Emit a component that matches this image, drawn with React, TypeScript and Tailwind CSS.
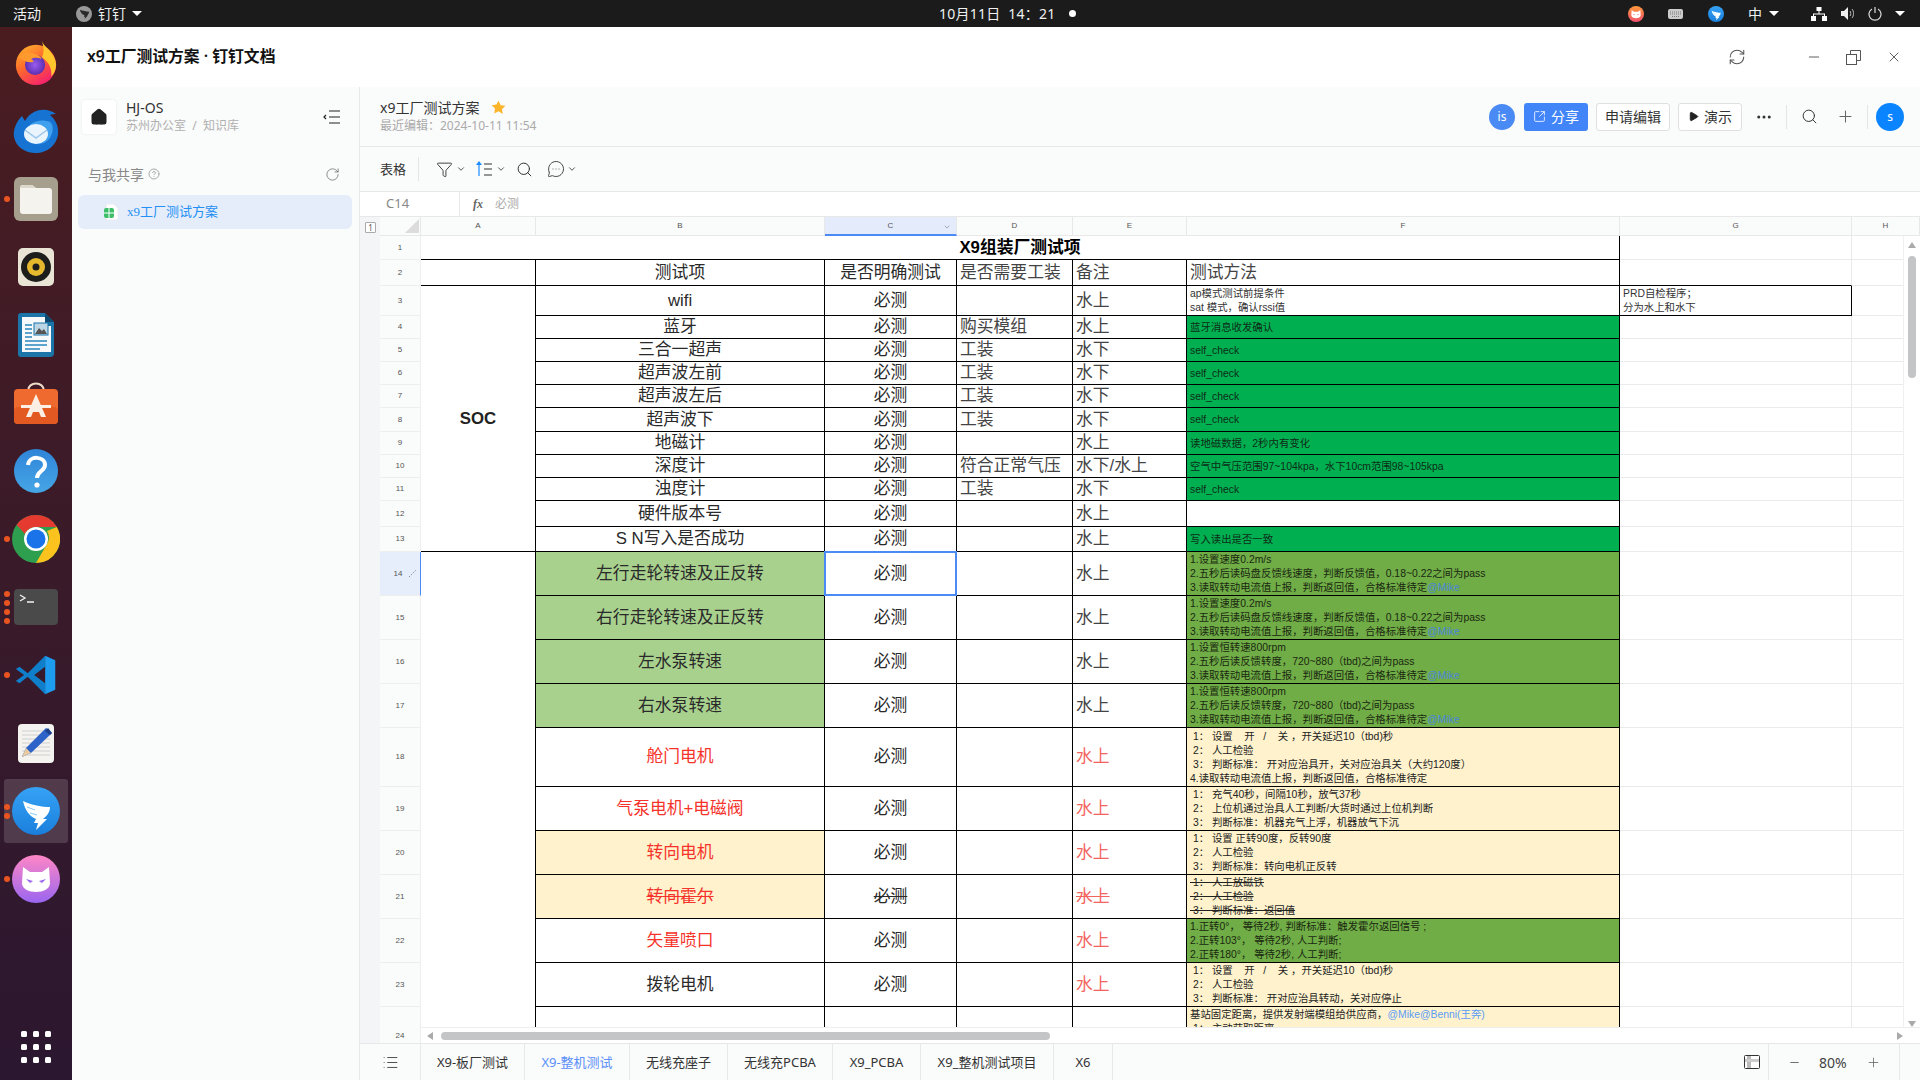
import React from "react";
import { RefreshCw, Minus, X, Search, Plus, SquareArrowOutUpRight, Play, Ellipsis, Funnel, ChevronDown, List, MessageCircleMore, RotateCw, House, CircleHelp } from "lucide-react";

const cellFont = "font-['Liberation_Sans','Noto_Sans_CJK_SC',sans-serif]";

const Firefox = () => (
  <svg width="46" height="46" viewBox="0 0 48 48">
    <defs>
      <linearGradient id="ff1" x1="0" y1="0" x2="0.6" y2="1"><stop offset="0" stopColor="#ffbd2e" /><stop offset="0.5" stopColor="#ff6a2b" /><stop offset="1" stopColor="#f5246b" /></linearGradient>
      <radialGradient id="ff2"><stop offset="0" stopColor="#9a5cf0" /><stop offset="1" stopColor="#5a2fb0" /></radialGradient>
    </defs>
    <circle cx="24" cy="26" r="21" fill="url(#ff1)" />
    <path d="M30 1c2 6 14 12 15 24 0 6-2 10-5 13 1-10-4-16-10-20 3-5 2-11 0-17z" fill="#ffc62e" />
    <circle cx="23" cy="26" r="10.5" fill="url(#ff2)" />
    <path d="M6 18c4-5 10-6 16-4 4 1 7 3 8 6-4-2-8-2-11 0 2 1 3 2 2 3-5 1-10-1-15-5z" fill="#ff9a2e" />
  </svg>
);
const Thunderbird = () => (
  <svg width="48" height="46" viewBox="0 0 48 46">
    <path d="M10 8c-6 6-9 14-8 21 2 10 11 16 22 16s21-8 22-19c1-8-3-15-8-19 2-1 4-1 6-1-5-4-14-6-22-2-4 2-7 5-9 9-1-2-2-3-3-5z" fill="#1673d1" />
    <path d="M14 22c4-8 14-12 24-8 3 2 4 8 1 14-3 7-12 10-19 7-6-3-8-8-6-13z" fill="#3fa0f0" />
    <ellipse cx="24" cy="26" rx="12" ry="10" fill="#eaf4fd" />
    <path d="M13 22l11 8 11-8" fill="none" stroke="#9cc6ea" strokeWidth="1.5" />
  </svg>
);
const Files = () => (
  <svg width="46" height="46" viewBox="0 0 46 46">
    <rect x="1" y="1" width="44" height="44" rx="6" fill="#a69f8e" />
    <path d="M7 12a3 3 0 013-3h9l4 3h13a3 3 0 013 3v20a3 3 0 01-3 3H10a3 3 0 01-3-3z" fill="#f5f3ee" />
    <path d="M7 12a3 3 0 013-3h9l4 3z" fill="#ddd8cc" />
  </svg>
);
const Rhythm = () => (
  <svg width="38" height="40" viewBox="0 0 38 40">
    <rect x="1" y="1" width="36" height="38" rx="5" fill="#e9e4d6" />
    <circle cx="19" cy="20" r="15" fill="#1d1d1b" />
    <circle cx="19" cy="20" r="9" fill="#e5b92e" />
    <circle cx="19" cy="20" r="3.5" fill="#1d1d1b" />
  </svg>
);
const Writer = () => (
  <svg width="38" height="46" viewBox="0 0 38 46">
    <path d="M4 1h24l9 9v31a4 4 0 01-4 4H4a3 3 0 01-3-3V4a3 3 0 013-3z" fill="#1b75a8" />
    <path d="M5 5h23v9h6v26H5z" fill="#f7f9fb" />
    <path d="M28 1l9 9h-9z" fill="#0e4a70" />
    <path d="M8 13h7M8 17h7M8 21h7M8 25h7M8 29h22M8 33h22M8 37h15" stroke="#2a86bf" strokeWidth="1.6" />
    <rect x="17" y="11" width="14" height="12" fill="#bcd6e6" stroke="#1b75a8" />
    <path d="M18 22l4-6 3 3 2-2 3 5z" fill="#555" />
  </svg>
);
const Store = () => (
  <svg width="46" height="44" viewBox="0 0 46 44">
    <path d="M15 10c0-10 16-10 16 0" fill="none" stroke="#ecdcc8" strokeWidth="2" />
    <rect x="1" y="8" width="44" height="35" rx="4" fill="#ef6a2e" />
    <rect x="1" y="26" width="44" height="17" rx="4" fill="#e25a22" />
    <path d="M23 13l-10 23h5l2-5h6l2 5h5z" fill="#fbeee4" />
    <path d="M8 24h30v3H8z" fill="#fbeee4" />
  </svg>
);
const Help = () => (
  <svg width="46" height="46" viewBox="0 0 46 46">
    <defs><linearGradient id="hp" x1="0" y1="0" x2="0" y2="1"><stop offset="0" stopColor="#2f84d8" /><stop offset="1" stopColor="#46a6e6" /></linearGradient></defs>
    <circle cx="23" cy="23" r="22" fill="url(#hp)" />
    <path d="M15 17c1-10 17-9 17 0 0 6-8 6-8 13" fill="none" stroke="#fff" strokeWidth="4" />
    <circle cx="24" cy="37" r="2.6" fill="#fff" />
  </svg>
);
const Chrome = () => (
  <svg width="48" height="48" viewBox="0 0 48 48">
    <circle cx="24" cy="24" r="24" fill="#2e9e4f" />
    <path d="M24 0a24 24 0 0120.8 12H24a12 12 0 00-11 7L4.6 9.8A24 24 0 0124 0z" fill="#e53a30" />
    <path d="M44.8 12A24 24 0 0124 48l10.4-18A12 12 0 0035 16z" fill="#fcc31e" />
    <circle cx="24" cy="24" r="12" fill="#fff" />
    <circle cx="24" cy="24" r="9.5" fill="#1a73e8" />
  </svg>
);
const Terminal = () => (
  <div className="w-[44px] h-[36px] rounded-[4px] bg-[#4a4a4a] relative">
    <svg width="44" height="36" viewBox="0 0 44 36" className="absolute inset-0">
      <path d="M6 6l5 3-5 3M13 13h7" fill="none" stroke="#f2f2f2" strokeWidth="1.3" />
    </svg>
  </div>
);
const VSCode = () => (
  <svg width="44" height="44" viewBox="0 0 48 48">
    <path fillRule="evenodd" d="M34 3L15 22 6 15l-4 2.5L11 24l-9 6.5L6 33l9-7 19 19V33L22 24l12-9z" fill="#0f7fcb" />
    <path d="M34 3l11 5v32l-11 5z" fill="#1e9cf0" />
  </svg>
);
const TextEd = () => (
  <svg width="38" height="46" viewBox="0 0 38 46">
    <rect x="1" y="4" width="36" height="39" rx="4" fill="#f4f3f0" />
    <path d="M5 11h28M5 15h28M5 19h28M5 23h28M5 27h28M5 31h28M5 35h28" stroke="#cfcfcf" />
    <path d="M29 8l6 5-21 20-9 4 4-9z" fill="#2d63c8" />
    <path d="M9 28l5 5-9 4z" fill="#e8c9a0" />
    <path d="M31 8l4 5-2 2-5-4z" fill="#1c3f88" />
  </svg>
);
const Wing = ({ id, size }: { id: string; size: number }) => (
  <svg width={size} height={size} viewBox="0 0 48 48">
    <defs><linearGradient id={id} x1="0" y1="0" x2="0" y2="1"><stop offset="0" stopColor="#36a2f5" /><stop offset="1" stopColor="#1a7fdc" /></linearGradient></defs>
    <circle cx="24" cy="24" r="24" fill={`url(#${id})`} />
    <path d="M11 14c9 4 19 6 27 6 0 5-3 9-7 12h4L24 43l2-7h-4l2-4c-7-3-11-9-13-18z" fill="#fff" />
    <path d="M15 20l8 3M18 26l7 2" stroke={"#8ccaf8"} strokeWidth="1" />
  </svg>
);
const Cat = ({ id, size, from = "#ff86c6", to = "#9a66f0" }: { id: string; size: number; from?: string; to?: string }) => (
  <svg width={size} height={size} viewBox="0 0 48 48">
    <defs><linearGradient id={id} x1="0" y1="0" x2="0" y2="1"><stop offset="0" stopColor={from} /><stop offset="1" stopColor={to} /></linearGradient></defs>
    <circle cx="24" cy="24" r="24" fill={`url(#${id})`} />
    <path d="M11 12l7 5h12l7-5 1 16c0 6-7 9-14 9s-14-3-14-9z" fill="#fff" />
    <path d="M14 24l7 2-3 2zM34 24l-7 2 3 2z" fill={to} />
  </svg>
);

const dockItems: { icon: React.ReactNode; dots: number; active?: boolean }[] = [
  { icon: <Firefox />, dots: 0 },
  { icon: <Thunderbird />, dots: 0 },
  { icon: <Files />, dots: 1 },
  { icon: <Rhythm />, dots: 0 },
  { icon: <Writer />, dots: 0 },
  { icon: <Store />, dots: 0 },
  { icon: <Help />, dots: 0 },
  { icon: <Chrome />, dots: 1 },
  { icon: <Terminal />, dots: 4 },
  { icon: <VSCode />, dots: 1 },
  { icon: <TextEd />, dots: 0 },
  { icon: <Wing id="w1" size={48} />, dots: 2, active: true },
  { icon: <Cat id="c1" size={48} />, dots: 1 },
];

function Dock() {
  return (
    <div className="w-[72px] shrink-0 flex flex-col bg-linear-to-b from-[#4a1c20] to-[#2b1730]">
      <div className="flex flex-col pt-[2px]">
        {dockItems.map((it, i) => (
          <div key={i} className="h-[68px] flex items-center justify-center relative">
            {it.active && <div className="absolute left-[4px] right-[4px] top-[2px] bottom-[2px] rounded-[3px] bg-white/15" />}
            {it.dots > 0 && (
              <div className="absolute left-[4px] top-0 bottom-0 flex flex-col justify-center gap-[3px]">
                {Array.from({ length: it.dots }).map((_, d) => (
                  <span key={d} className="block w-[6px] h-[6px] rounded-full bg-[#e95420]" />
                ))}
              </div>
            )}
            <div className="relative flex items-center justify-center">{it.icon}</div>
          </div>
        ))}
      </div>
      <div className="mt-auto mb-[17px] self-center grid grid-cols-3 gap-x-[6px] gap-y-[7px]">
        {Array.from({ length: 9 }).map((_, i) => (
          <span key={i} className="block w-[6px] h-[6px] rounded-[1.5px] bg-white" />
        ))}
      </div>
    </div>
  );
}

function TopBar() {
  return (
    <div className="h-[27px] shrink-0 bg-[#1b1b1b] text-[#f0f0f0] text-[14px] flex items-center relative">
      <span className="ml-[13px]">活动</span>
      <span className="ml-[35px] w-[16px] h-[16px] rounded-full bg-[#999] flex items-center justify-center">
        <svg width="11" height="11" viewBox="0 0 48 48"><path d="M4 8c11 5 28 8 40 8 0 8-5 13-10 17h5L24 48l3-10h-6l3-6C13 28 7 20 4 8z" fill="#2a2a2a" /></svg>
      </span>
      <span className="ml-[6px]">钉钉</span>
      <span className="ml-[6px] w-0 h-0 border-x-[5px] border-x-transparent border-t-[5px] border-t-white" />
      <div className="absolute left-[939px] top-0 h-[27px] flex items-center gap-[13px]">
        <span className="whitespace-pre tracking-[0.25px]">10月11日  14：21</span>
        <span className="w-[7px] h-[7px] rounded-full bg-white" />
      </div>
      <div className="ml-auto flex items-center h-full">
        <Cat id="c2" size={16} from="#ff9a3c" to="#f0506e" />
        <svg className="ml-[24px]" width="15" height="10" viewBox="0 0 15 10"><rect width="15" height="10" rx="2" fill="#ccc" /><path d="M2 3h11M2 5h11M4 7.5h7" stroke="#777" strokeWidth="1" strokeDasharray="1 1" /></svg>
        <span className="ml-[25px]"><Wing id="w2" size={16} /></span>
        <span className="ml-[24px] w-[16px]">中</span>
        <span className="ml-[5px] w-0 h-0 border-x-[5px] border-x-transparent border-t-[5px] border-t-white" />
        <svg className="ml-[32px]" width="16" height="14" viewBox="0 0 16 14" fill="#fff"><rect x="5.5" y="0" width="5" height="4" /><rect x="0" y="9" width="5" height="5" /><rect x="11" y="9" width="5" height="5" /><path d="M7.5 4h1v2.5H14V9h-1V7.5H3V9H2V6.500h5.500z" /></svg>
        <svg className="ml-[14px]" width="15" height="13" viewBox="0 0 15 13"><path d="M0 4h3l4-4v13l-4-4H0z" fill="#eee" /><path d="M9 4c1 1 1 4 0 5M11 2c2 2 2 7 0 9" stroke="#bbb" fill="none" /></svg>
        <svg className="ml-[12px]" width="14" height="14" viewBox="0 0 14 14" fill="none" stroke="#ddd" strokeWidth="1.2"><path d="M4 2a6 6 0 106 0M7 0v6" /></svg>
        <span className="ml-[13px] mr-[15px] w-0 h-0 border-x-[5px] border-x-transparent border-t-[5px] border-t-white" />
      </div>
    </div>
  );
}

function Sidebar() {
  return (
    <div className="w-[288px] shrink-0 bg-[#fafbfb] border-r border-[#e8e8e8] flex flex-col">
      <div className="flex items-center pl-[10px] pr-[18px] pt-[11px]">
        <div className="w-[34px] h-[34px] rounded-[4px] bg-white shadow-[0_0_3px_rgba(0,0,0,0.08)] flex items-center justify-center">
          <House size={18} fill="#222" stroke="#222" />
        </div>
        <div className="ml-[10px] flex flex-col">
          <span className="text-[14px] leading-[19px] text-[#333]">HJ-OS</span>
          <span className="text-[12px] leading-[18px] text-[#b0b0b0]">苏州办公室&nbsp;&nbsp;/&nbsp;&nbsp;知识库</span>
        </div>
        <svg className="ml-auto" width="18" height="14" viewBox="0 0 18 14" fill="none" stroke="#222" strokeWidth="1.2"><path d="M6 1h11M6 7h11M6 13h11M3 5L1 7l2 2" /></svg>
      </div>
      <div className="flex items-center pl-[16px] pr-[19px] mt-[27px] h-[24px]">
        <span className="text-[14px] text-[#888]">与我共享</span>
        <CircleHelp size={12} className="ml-[4px] text-[#aaa]" />
        <RotateCw size={15} strokeWidth={1.2} className="ml-auto text-[#666]" />
      </div>
      <div className="ml-[6px] mr-[7px] mt-[9px] h-[34px] rounded-[6px] bg-[#e6edfa] flex items-center pl-[26px]">
        <svg width="14" height="16" viewBox="0 0 14 16"><path d="M2 0h8l4 4v12H2z" fill="#fff" stroke="#ddd" strokeWidth="0.6" /><rect x="0" y="4" width="10" height="10" rx="2" fill="#3dbf6a" /><path d="M0 9h10M5 4v10" stroke="#fff" /></svg>
        <span className="ml-[9px] text-[13px] text-[#2390f5] font-['Liberation_Serif','Noto_Sans_CJK_SC',serif]">x9工厂测试方案</span>
      </div>
    </div>
  );
}

function DocHeader() {
  return (
    <div className="h-[60px] shrink-0 bg-[#fafbfb] border-b border-[#e8e8e8] flex items-center pl-[20px]">
      <div className="flex flex-col">
        <div className="flex items-center">
          <span className="text-[14px] leading-[19px] text-[#333]">x9工厂测试方案</span>
          <svg className="ml-[12px]" width="15" height="15" viewBox="0 0 24 24" fill="#fbb52b"><path d="M12 1l3.400 7.200 7.600 1-5.500 5.400 1.400 7.900L12 18l-6.900 3.500 1.400-7.900L1 8.200l7.600-1z" /></svg>
        </div>
        <span className="text-[12px] leading-[18px] text-[#aaa]">最近编辑：2024-10-11 11:54</span>
      </div>
      <div className="ml-auto flex items-center pr-[16px]">
        <span className="w-[26px] h-[26px] rounded-full bg-[#4a8af4] text-white text-[12px] flex items-center justify-center">is</span>
        <button className="ml-[9px] w-[64px] h-[28px] rounded-[3px] bg-[#4285f8] text-white text-[14px] flex items-center justify-center gap-[5px]">
          <SquareArrowOutUpRight size={13} strokeWidth={1.5} />分享
        </button>
        <button className="ml-[8px] w-[74px] h-[28px] rounded-[3px] bg-white border border-[#e0e0e0] text-[14px] text-[#333]">申请编辑</button>
        <button className="ml-[8px] w-[64px] h-[28px] rounded-[3px] bg-white border border-[#e0e0e0] text-[14px] text-[#333] flex items-center justify-center gap-[5px]">
          <Play size={11} fill="#222" stroke="#222" />演示
        </button>
        <Ellipsis size={18} className="ml-[13px] text-[#333]" />
        <span className="ml-[13px] w-px h-[24px] bg-[#e5e5e5]" />
        <Search size={17} strokeWidth={1.4} className="ml-[14px] text-[#333]" />
        <Plus size={19} strokeWidth={1.3} className="ml-[18px] text-[#666]" />
        <span className="ml-[12px] w-px h-[24px] bg-[#e5e5e5]" />
        <span className="ml-[8px] w-[28px] h-[28px] rounded-full bg-[#0a84ff] text-white text-[12px] flex items-center justify-center">s</span>
      </div>
    </div>
  );
}

function Toolbar() {
  return (
    <div className="h-[45px] shrink-0 bg-[#fafbfb] border-b border-[#e8e8e8] flex items-center pl-[20px] text-[#333]">
      <span className="text-[13px] pt-px">表格</span>
      <span className="ml-[12px] w-px h-[24px] bg-[#e5e5e5]" />
      <Funnel size={17} strokeWidth={1.3} className="ml-[17px]" />
      <ChevronDown size={10} className="ml-[3px]" />
      <svg className="ml-[10px]" width="18" height="16" viewBox="0 0 18 16" fill="none"><path d="M3 15V3" stroke="#1a8cff" strokeWidth="1.2" /><path d="M3 0l3 4H0z" fill="#1a8cff" /><path d="M8 3h8M8 8h8M8 14h8" stroke="#333" strokeWidth="1.2" /></svg>
      <ChevronDown size={10} className="ml-[2px]" />
      <Search size={17} strokeWidth={1.4} className="ml-[10px]" />
      <MessageCircleMore size={18} strokeWidth={1.2} className="ml-[14px]" />
      <ChevronDown size={10} className="ml-[2px]" />
    </div>
  );
}

function FormulaBar() {
  return (
    <div className="h-[25px] shrink-0 bg-white border-b border-[#e8e8e8] flex items-center">
      <div className="w-[100px] h-full border-r border-[#e8e8e8] pl-[26px] flex items-center text-[13px] text-[#888]">C14</div>
      <span className="ml-[13px] text-[12px] italic font-bold font-['Liberation_Serif',serif] text-[#666]">fx</span>
      <span className="ml-[12px] text-[12px] text-[#aaa]">必测</span>
    </div>
  );
}

type Row = {
  n: number;
  h: string;
  b?: string;
  bCls?: string;
  c?: string;
  cCls?: string;
  d?: string;
  e?: string;
  eCls?: string;
  f?: React.ReactNode;
  fCls?: string;
  top?: boolean;
};

const Mike = () => <span className="text-[#4a86d8]">@Mike</span>;
const speedLines = (
  <>
    1.设置速度0.2m/s<br />2.五秒后读码盘反馈线速度，判断反馈值，0.18~0.22之间为pass<br />3.读取转动电流值上报，判断返回值，合格标准待定<Mike />
  </>
);
const pumpLines = (
  <>
    1.设置恒转速800rpm<br />2.五秒后读反馈转度，720~880（tbd)之间为pass<br />3.读取转动电流值上报，判断返回值，合格标准待定<Mike />
  </>
);
const G1 = "bg-[#00b050] text-[#0e2c18]";
const G2 = "bg-[#70ad47] text-[#1a2810]";
const CR = "bg-[#fff2cc] text-[#222]";
const LG = "bg-[#a9d18e]";
const Y = "bg-[#fff2cc]";
const RB = "text-[#f5332b]";
const RE = "text-[#f4645f]";

const rows: Row[] = [
  { n: 3, h: "h-[30px]", b: "wifi", c: "必测", e: "水上", f: <>ap模式测试前提条件<br />sat 模式，确认rssi值</> },
  { n: 4, h: "h-[23px]", b: "蓝牙", c: "必测", d: "购买模组", e: "水上", f: "蓝牙消息收发确认", fCls: G1 },
  { n: 5, h: "h-[23px]", b: "三合一超声", c: "必测", d: "工装", e: "水下", f: "self_check", fCls: G1 },
  { n: 6, h: "h-[23px]", b: "超声波左前", c: "必测", d: "工装", e: "水下", f: "self_check", fCls: G1 },
  { n: 7, h: "h-[23px]", b: "超声波左后", c: "必测", d: "工装", e: "水下", f: "self_check", fCls: G1 },
  { n: 8, h: "h-[24px]", b: "超声波下", c: "必测", d: "工装", e: "水下", f: "self_check", fCls: G1 },
  { n: 9, h: "h-[23px]", b: "地磁计", c: "必测", e: "水上", f: "读地磁数据，2秒内有变化", fCls: G1 },
  { n: 10, h: "h-[23px]", b: "深度计", c: "必测", d: "符合正常气压", e: "水下/水上", f: "空气中气压范围97~104kpa，水下10cm范围98~105kpa", fCls: G1 },
  { n: 11, h: "h-[23px]", b: "浊度计", c: "必测", d: "工装", e: "水下", f: "self_check", fCls: G1 },
  { n: 12, h: "h-[26px]", b: "硬件版本号", c: "必测", e: "水上" },
  { n: 13, h: "h-[25px]", b: "S N写入是否成功", c: "必测", e: "水上", f: "写入读出是否一致", fCls: G1 },
  { n: 14, h: "h-[44px]", b: "左行走轮转速及正反转", bCls: LG, c: "必测", e: "水上", f: speedLines, fCls: G2 },
  { n: 15, h: "h-[44px]", b: "右行走轮转速及正反转", bCls: LG, c: "必测", e: "水上", f: speedLines, fCls: G2 },
  { n: 16, h: "h-[44px]", b: "左水泵转速", bCls: LG, c: "必测", e: "水上", f: pumpLines, fCls: G2 },
  { n: 17, h: "h-[44px]", b: "右水泵转速", bCls: LG, c: "必测", e: "水上", f: pumpLines, fCls: G2 },
  { n: 18, h: "h-[59px]", b: "舱门电机", bCls: RB, c: "必测", e: "水上", eCls: RE, fCls: CR, f: <> 1： 设置    开   /    关 ，开关延迟10（tbd)秒<br /> 2： 人工检验<br /> 3： 判断标准： 开对应治具开，关对应治具关（大约120度）<br />4.读取转动电流值上报，判断返回值，合格标准待定</> },
  { n: 19, h: "h-[44px]", b: "气泵电机+电磁阀", bCls: RB, c: "必测", e: "水上", eCls: RE, fCls: CR, f: <> 1： 充气40秒，间隔10秒，放气37秒<br /> 2： 上位机通过治具人工判断/大货时通过上位机判断<br /> 3： 判断标准：机器充气上浮，机器放气下沉</> },
  { n: 20, h: "h-[44px]", b: "转向电机", bCls: `${Y} ${RB}`, c: "必测", e: "水上", eCls: RE, fCls: CR, f: <> 1： 设置 正转90度，反转90度<br /> 2： 人工检验<br /> 3： 判断标准：转向电机正反转</> },
  { n: 21, h: "h-[44px]", b: "转向霍尔", bCls: `${Y} ${RB} line-through`, c: "必测", cCls: "line-through", e: "水上", eCls: `${RE} line-through`, fCls: `${CR} line-through`, f: <> 1： 人工放磁铁<br /> 2： 人工检验<br /> 3： 判断标准：返回值</> },
  { n: 22, h: "h-[44px]", b: "矢量喷口", bCls: RB, c: "必测", e: "水上", eCls: RE, fCls: G2, f: <>1.正转0°， 等待2秒, 判断标准：触发霍尔返回信号 ;<br />2.正转103°， 等待2秒, 人工判断;<br />2.正转180°， 等待2秒, 人工判断;</> },
  { n: 23, h: "h-[44px]", b: "拨轮电机", c: "必测", e: "水上", eCls: RE, fCls: CR, f: <> 1： 设置    开   /    关 ，开关延迟10（tbd)秒<br /> 2： 人工检验<br /> 3： 判断标准： 开对应治具转动，关对应停止</> },
  { n: 24, h: "h-[59px]", top: true, fCls: CR, f: <>基站固定距离，提供发射端模组给供应商，<span className="text-[#5b9cf6]">@Mike@Benni(王奔)</span><br /> 1： 主动获取距离</> },
];

const RH = "bg-[#fafbfb] border-b border-r border-[#eeeeee] text-center text-[8px] text-[#555] p-0";
const big = "border-b border-r border-black p-0 text-[16.8px] leading-[18px] text-[#2a2a2a] text-center align-middle overflow-hidden whitespace-nowrap";
const left = "border-b border-r border-black pl-[3px] p-0 text-[16.8px] leading-[18px] text-[#444] text-left align-middle whitespace-nowrap overflow-hidden";
const method = "border-b border-r border-black pl-[3px] pr-0 pt-px pb-0 text-[10.4px] leading-[14px] text-left align-middle whitespace-pre overflow-hidden";
const blank = "border-b border-r border-[#eaeaea] p-0";

function Sheet() {
  const headers: [string, string][] = [["A", ""], ["B", ""], ["C", "sel"], ["D", ""], ["E", ""], ["F", ""], ["G", ""], ["H", ""]];
  return (
    <div className="flex-1 min-h-0 flex bg-white">
      <div className="w-[20px] shrink-0 bg-[#f4f5f6] pt-[5px] pl-[5px]">
        <span className="w-[11px] h-[11px] bg-white border border-[#aaa] text-[8px] leading-[9px] text-center text-[#555] block rounded-[1px]">1</span>
      </div>
      <div className={`relative flex-1 min-w-0 overflow-hidden ${cellFont}`}>
        <table className="table-fixed border-separate border-spacing-0 w-[1540px]">
          <colgroup>
            <col className="w-[41px]" />
            <col className="w-[115px]" />
            <col className="w-[289px]" />
            <col className="w-[132px]" />
            <col className="w-[116px]" />
            <col className="w-[114px]" />
            <col className="w-[433px]" />
            <col className="w-[232px]" />
            <col className="w-[68px]" />
          </colgroup>
          <tbody>
            <tr className="h-[19px]">
              <td className="bg-[#fafbfb] border-b border-r border-[#e8e8e8] p-0">
                <svg className="ml-[25px]" width="14" height="14" viewBox="0 0 14 14"><path d="M14 0v14H0z" fill="#dcdcdc" /></svg>
              </td>
              {headers.map(([l, s]) =>
                s ? (
                  <td key={l} className="bg-[#e4ecfb] border-b-2 border-b-[#4a8af4] border-r border-r-[#e8e8e8] p-0 text-center text-[8px] text-[#555] relative">
                    {l}
                    <ChevronDown size={8} className="absolute right-[5px] top-[6px] text-[#888]" />
                  </td>
                ) : (
                  <td key={l} className="bg-[#fafbfb] border-b border-r border-[#e8e8e8] p-0 text-center text-[8px] text-[#555]">{l}</td>
                )
              )}
            </tr>
            <tr className="h-[24px]">
              <td className={RH}>1</td>
              <td colSpan={6} className="border-b border-r border-black p-0 text-center text-[16.8px] leading-[18px] font-bold text-black">X9组装厂测试项</td>
              <td className={blank} />
              <td className={blank} />
            </tr>
            <tr className="h-[26px]">
              <td className={RH}>2</td>
              <td className="border-b border-r border-black p-0" />
              <td className={big}>测试项</td>
              <td className={big}>是否明确测试</td>
              <td className={left}>是否需要工装</td>
              <td className={left}>备注</td>
              <td className={left}>测试方法</td>
              <td className="border-b border-r border-b-black border-r-[#eaeaea] p-0" />
              <td className={blank} />
            </tr>
            {rows.map((r) => (
              <tr key={r.n} className={r.h}>
                {r.n === 14 ? (
                  <td className="bg-[#e6edfb] border-b border-r border-b-[#eeeeee] border-r-[#4a8af4] p-0 text-[8px] text-[#555] text-center relative">
                    <span className="mr-[4px]">14</span>
                    <svg className="absolute right-[4px] top-[18px]" width="7" height="7" viewBox="0 0 7 7" fill="none" stroke="#889" strokeWidth="1"><path d="M0 7l7-7" strokeDasharray="1.500 1.500" /></svg>
                  </td>
                ) : (
                  <td className={RH}>{r.n}</td>
                )}
                {r.n === 3 && <td rowSpan={11} className="border-b border-r border-black p-0 text-center text-[16.8px] font-bold text-[#222]">SOC</td>}
                {r.n === 14 && <td rowSpan={11} className="border-r border-black p-0" />}
                <td className={`${big} ${r.bCls ?? ""}`}>{r.b}</td>
                <td className={`${big} ${r.cCls ?? ""} ${r.n === 14 ? "relative overflow-visible" : ""}`}>
                  {r.c}
                  {r.n === 14 && <span className="absolute -left-px -top-px -right-px -bottom-px border-2 border-[#4a8af4]" />}
                </td>
                <td className={left}>{r.d}</td>
                <td className={`${left} ${r.eCls ?? ""}`}>{r.e}</td>
                <td className={`${method} ${r.fCls ?? "text-[#333]"} ${r.top ? "align-top" : ""}`}>{r.f}</td>
                {r.n === 3 ? (
                  <td className={`${method} text-[#333]`}>PRD自检程序；<br />分为水上和水下</td>
                ) : (
                  <td className={blank} />
                )}
                <td className={blank} />
              </tr>
            ))}
          </tbody>
        </table>
        <div className="absolute right-0 top-[19px] bottom-0 w-[17px] bg-white border-l border-[#f0f0f0]">
          <span className="absolute left-[4px] top-[6px] w-0 h-0 border-x-[4px] border-x-transparent border-b-[6px] border-b-[#aaa]" />
          <span className="absolute left-[4px] top-[20px] w-[8px] h-[122px] rounded-[4px] bg-[#c4c5c7]" />
          <span className="absolute left-[4px] bottom-[16px] w-0 h-0 border-x-[4px] border-x-transparent border-t-[6px] border-t-[#aaa]" />
        </div>
        <div className="absolute left-[41px] right-0 bottom-0 h-[16px] bg-white border-t border-[#eeeeee]">
          <span className="absolute left-[6px] top-[4px] w-0 h-0 border-y-[4px] border-y-transparent border-r-[6px] border-r-[#aaa]" />
          <span className="absolute left-[20px] top-[4px] w-[609px] h-[8px] rounded-[4px] bg-[#c4c5c7]" />
          <span className="absolute right-[17px] top-[4px] w-0 h-0 border-y-[4px] border-y-transparent border-l-[6px] border-l-[#aaa]" />
        </div>
      </div>
    </div>
  );
}

const tabs: [string, string, boolean][] = [
  ["X9-板厂测试", "w-[104px]", false],
  ["X9-整机测试", "w-[105px]", true],
  ["无线充座子", "w-[98px]", false],
  ["无线充PCBA", "w-[105px]", false],
  ["X9_PCBA", "w-[88px]", false],
  ["X9_整机测试项目", "w-[133px]", false],
  ["X6", "w-[59px]", false],
];

function Tabs() {
  return (
    <div className="h-[37px] shrink-0 bg-[#fafbfb] border-t border-[#e8e8e8] flex items-stretch">
      <div className="w-[61px] border-r border-[#e8e8e8] flex items-center justify-center">
        <List size={17} strokeWidth={1.2} className="text-[#333]" />
      </div>
      {tabs.map(([t, w, a]) => (
        <div key={t} className={`${w} border-r border-[#e8e8e8] flex items-center justify-center pt-px text-[13px] ${a ? "text-[#5b8ff9]" : "text-[#333]"}`}>{t}</div>
      ))}
      <div className="ml-auto flex items-center">
        <svg width="16" height="14" viewBox="0 0 16 14"><rect x="0.5" y="0.5" width="15" height="13" rx="1" fill="#fff" stroke="#333" /><rect x="3" y="1" width="4" height="12" fill="#bbb" /><rect x="1" y="4" width="14" height="3" fill="#ccc" /></svg>
        <div className="ml-[8px] w-[132px] h-full border-x border-[#e8e8e8] flex items-center pl-[19px]">
          <Minus size={13} strokeWidth={1.3} className="text-[#333]" />
          <span className="ml-[18px] text-[14px] text-[#444]">80%</span>
          <Plus size={15} strokeWidth={1.3} className="ml-[19px] text-[#666]" />
        </div>
        <div className="w-[20px]" />
      </div>
    </div>
  );
}

export default function App() {
  return (
    <div className="w-[1920px] h-[1080px] flex flex-col overflow-hidden font-['Noto_Sans','Noto_Sans_CJK_SC',sans-serif]">
      <TopBar />
      <div className="flex-1 min-h-0 flex">
        <Dock />
        <div className="flex-1 min-w-0 flex flex-col">
          <div className="h-[60px] shrink-0 bg-white flex items-center pl-[15px] pr-[18px]">
            <span className="text-[15.8px] font-semibold text-[#111]">x9工厂测试方案 · 钉钉文档</span>
            <RefreshCw size={18} strokeWidth={1.4} className="ml-auto text-[#555]" />
            <Minus size={16} strokeWidth={1.4} className="ml-[60px] text-[#555]" />
            <svg className="ml-[24px]" width="15" height="15" viewBox="0 0 15 15" fill="none" stroke="#555"><rect x="0.5" y="4.500" width="10" height="10" /><path d="M4.500 4.500v-4h10v10h-4" /></svg>
            <X size={16} strokeWidth={1.4} className="ml-[25px] text-[#555]" />
          </div>
          <div className="flex-1 min-h-0 flex">
            <Sidebar />
            <div className="flex-1 min-w-0 flex flex-col">
              <DocHeader />
              <Toolbar />
              <FormulaBar />
              <Sheet />
              <Tabs />
            </div>
          </div>
        </div>
      </div>
    </div>
  );
}
